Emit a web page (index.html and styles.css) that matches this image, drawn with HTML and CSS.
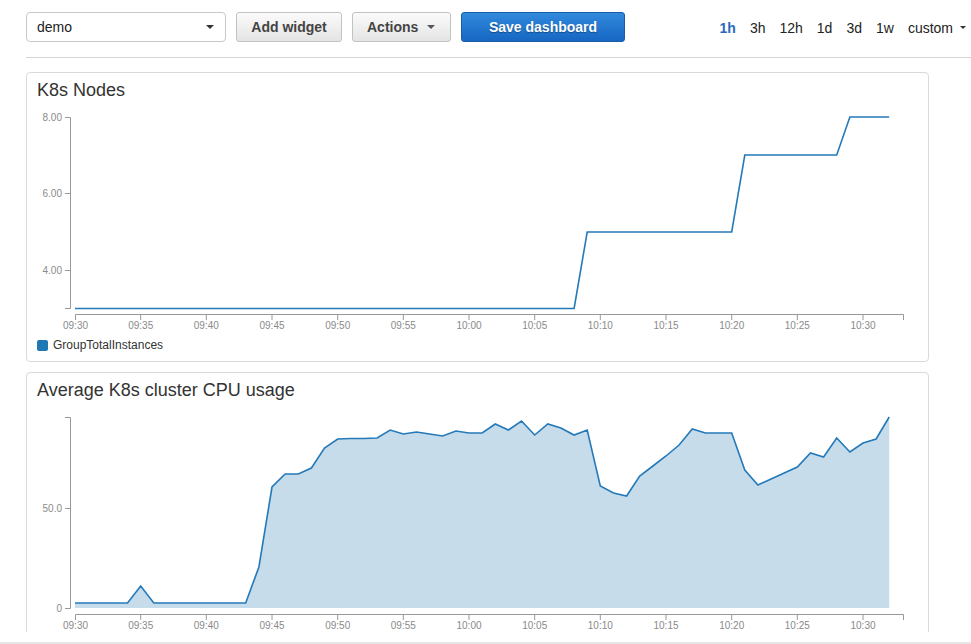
FILE: index.html
```html
<!DOCTYPE html>
<html>
<head>
<meta charset="utf-8">
<title>Dashboard</title>
<link rel="stylesheet" href="styles.css">
</head>
<body>
<div class="toolbar">
  <div class="toolbar-left">
    <div class="select"><span class="select-value">demo</span><span class="caret"></span></div>
    <button class="btn btn-add">Add widget</button>
    <button class="btn btn-actions">Actions<span class="caret caret-btn"></span></button>
    <button class="btn btn-primary">Save dashboard</button>
  </div>
  <div class="ranges">
    <span class="range active">1h</span>
    <span class="range">3h</span>
    <span class="range">12h</span>
    <span class="range">1d</span>
    <span class="range">3d</span>
    <span class="range">1w</span>
    <span class="range range-custom">custom<span class="caret caret-small"></span></span>
  </div>
</div>

<div class="dashboard">
  <div class="panel panel-nodes">
    <div class="panel-title">K8s Nodes</div>
    <svg class="chart" width="901" height="230" viewBox="27 105 901 230">
      <g class="axis">
        <path d="M65,117.5H70.5V308.5H65"/>
        <line x1="65" y1="193.5" x2="70.5" y2="193.5"/>
        <line x1="65" y1="270.5" x2="70.5" y2="270.5"/>
        <text x="62" y="120.5" text-anchor="end">8.00</text>
        <text x="62" y="196.5" text-anchor="end">6.00</text>
        <text x="62" y="273.5" text-anchor="end">4.00</text>
      </g>
      <g class="axis">
        <path d="M75.5,320V314.5H903.5V320"/>
        <line x1="140.7" y1="314.5" x2="140.7" y2="320"/>
        <line x1="206.3" y1="314.5" x2="206.3" y2="320"/>
        <line x1="272" y1="314.5" x2="272" y2="320"/>
        <line x1="337.7" y1="314.5" x2="337.7" y2="320"/>
        <line x1="403.3" y1="314.5" x2="403.3" y2="320"/>
        <line x1="469" y1="314.5" x2="469" y2="320"/>
        <line x1="534.7" y1="314.5" x2="534.7" y2="320"/>
        <line x1="600.3" y1="314.5" x2="600.3" y2="320"/>
        <line x1="666" y1="314.5" x2="666" y2="320"/>
        <line x1="731.7" y1="314.5" x2="731.7" y2="320"/>
        <line x1="797.3" y1="314.5" x2="797.3" y2="320"/>
        <line x1="863" y1="314.5" x2="863" y2="320"/>
        <text x="75.5" y="329" text-anchor="middle">09:30</text>
        <text x="140.7" y="329" text-anchor="middle">09:35</text>
        <text x="206.3" y="329" text-anchor="middle">09:40</text>
        <text x="272" y="329" text-anchor="middle">09:45</text>
        <text x="337.7" y="329" text-anchor="middle">09:50</text>
        <text x="403.3" y="329" text-anchor="middle">09:55</text>
        <text x="469" y="329" text-anchor="middle">10:00</text>
        <text x="534.7" y="329" text-anchor="middle">10:05</text>
        <text x="600.3" y="329" text-anchor="middle">10:10</text>
        <text x="666" y="329" text-anchor="middle">10:15</text>
        <text x="731.7" y="329" text-anchor="middle">10:20</text>
        <text x="797.3" y="329" text-anchor="middle">10:25</text>
        <text x="863" y="329" text-anchor="middle">10:30</text>
      </g>
      <path class="series-line" d="M75,308.5H574.1L587.2,232H731.7L744.8,155H836.7L849.9,117H889.2"/>
    </svg>
    <div class="legend">
      <span class="legend-swatch"></span><span class="legend-label">GroupTotalInstances</span>
    </div>
  </div>

  <div class="panel panel-cpu">
    <div class="panel-title">Average K8s cluster CPU usage</div>
    <svg class="chart" width="901" height="240" viewBox="27 405 901 240">
      <path class="series-area" d="M75,608L75,603L88.1,603L101.3,603L114.4,603L127.5,603L140.7,586L153.8,603L166.9,603L180.1,603L193.2,603L206.3,603L219.5,603L232.6,603L245.7,603L258.9,567L272,487L285.1,474L298.3,474L311.4,468L324.5,448L337.7,439L350.8,438.5L363.9,438.5L377.1,438L390.2,430L403.3,434L416.5,432L429.6,434L442.7,436L455.9,431L469,433L482.1,433L495.3,424L508.4,430L521.5,421L534.7,435L547.8,424L560.9,428L574.1,435L587.2,430L600.3,486L613.5,493L626.6,496L639.7,476L652.9,466L666,456L679.1,445L692.3,429L705.4,433L718.5,433L731.7,433L744.8,470L757.9,485L771.1,479L784.2,473L797.3,467L810.5,453L823.6,457L836.7,438L849.9,452L863,443L876.1,439L889.2,417L889.2,608Z"/>
      <path class="series-line" d="M75,603L88.1,603L101.3,603L114.4,603L127.5,603L140.7,586L153.8,603L166.9,603L180.1,603L193.2,603L206.3,603L219.5,603L232.6,603L245.7,603L258.9,567L272,487L285.1,474L298.3,474L311.4,468L324.5,448L337.7,439L350.8,438.5L363.9,438.5L377.1,438L390.2,430L403.3,434L416.5,432L429.6,434L442.7,436L455.9,431L469,433L482.1,433L495.3,424L508.4,430L521.5,421L534.7,435L547.8,424L560.9,428L574.1,435L587.2,430L600.3,486L613.5,493L626.6,496L639.7,476L652.9,466L666,456L679.1,445L692.3,429L705.4,433L718.5,433L731.7,433L744.8,470L757.9,485L771.1,479L784.2,473L797.3,467L810.5,453L823.6,457L836.7,438L849.9,452L863,443L876.1,439L889.2,417"/>
      <g class="axis">
        <path d="M65,417.5H70.5V608.5H65"/>
        <line x1="65" y1="508.5" x2="70.5" y2="508.5"/>
        <text x="62" y="511.5" text-anchor="end">50.0</text>
        <text x="62" y="611.5" text-anchor="end">0</text>
      </g>
      <g class="axis">
        <path d="M75.5,620V614.5H903.5V620"/>
        <line x1="140.7" y1="614.5" x2="140.7" y2="620"/>
        <line x1="206.3" y1="614.5" x2="206.3" y2="620"/>
        <line x1="272" y1="614.5" x2="272" y2="620"/>
        <line x1="337.7" y1="614.5" x2="337.7" y2="620"/>
        <line x1="403.3" y1="614.5" x2="403.3" y2="620"/>
        <line x1="469" y1="614.5" x2="469" y2="620"/>
        <line x1="534.7" y1="614.5" x2="534.7" y2="620"/>
        <line x1="600.3" y1="614.5" x2="600.3" y2="620"/>
        <line x1="666" y1="614.5" x2="666" y2="620"/>
        <line x1="731.7" y1="614.5" x2="731.7" y2="620"/>
        <line x1="797.3" y1="614.5" x2="797.3" y2="620"/>
        <line x1="863" y1="614.5" x2="863" y2="620"/>
        <text x="75.5" y="629" text-anchor="middle">09:30</text>
        <text x="140.7" y="629" text-anchor="middle">09:35</text>
        <text x="206.3" y="629" text-anchor="middle">09:40</text>
        <text x="272" y="629" text-anchor="middle">09:45</text>
        <text x="337.7" y="629" text-anchor="middle">09:50</text>
        <text x="403.3" y="629" text-anchor="middle">09:55</text>
        <text x="469" y="629" text-anchor="middle">10:00</text>
        <text x="534.7" y="629" text-anchor="middle">10:05</text>
        <text x="600.3" y="629" text-anchor="middle">10:10</text>
        <text x="666" y="629" text-anchor="middle">10:15</text>
        <text x="731.7" y="629" text-anchor="middle">10:20</text>
        <text x="797.3" y="629" text-anchor="middle">10:25</text>
        <text x="863" y="629" text-anchor="middle">10:30</text>
      </g>
    </svg>
  </div>
</div>
<div class="spacer"></div>
<div class="bottom-strip"></div>
</body>
</html>
```

FILE: styles.css
```css
* { box-sizing: border-box; }

html, body {
  margin: 0;
  padding: 0;
  background: #ffffff;
}

body {
  font-family: "Liberation Sans", Arial, Helvetica, sans-serif;
  color: #333;
  width: 971px;
  height: 644px;
  overflow: hidden;
}

.toolbar {
  margin-left: 26px;
  height: 58px;
  padding: 12px 5px 0 0;
  border-bottom: 1px solid #d4d4d4;
  display: flex;
  justify-content: space-between;
  align-items: flex-start;
}

.toolbar-left {
  display: flex;
  gap: 10px;
}

.select {
  width: 200px;
  height: 30px;
  border: 1px solid #c9c9c9;
  border-radius: 4px;
  background: #fff;
  display: flex;
  align-items: center;
  justify-content: space-between;
  padding: 0 11px 0 10px;
  font-size: 14px;
  color: #222;
}

.caret {
  display: inline-block;
  width: 0;
  height: 0;
  border-left: 4px solid transparent;
  border-right: 4px solid transparent;
  border-top: 4px solid #333;
}

.btn {
  height: 30px;
  border: 1px solid #c2c2c2;
  border-radius: 3px;
  background: linear-gradient(#fbfbfb, #e4e4e4);
  font-family: "Liberation Sans", Arial, Helvetica, sans-serif;
  font-weight: bold;
  font-size: 14px;
  color: #444;
  padding: 0;
  display: flex;
  align-items: center;
  justify-content: center;
}

.btn-add { width: 106px; }

.btn-actions {
  width: 99px;
  justify-content: flex-start;
  padding-left: 14px;
}

.caret-btn {
  margin-left: 9px;
  border-top-color: #555;
}

.btn-primary {
  width: 164px;
  background: linear-gradient(#3189dc, #1667c3);
  border-color: #1a5ca6;
  color: #fff;
  text-shadow: 0 1px 1px rgba(0, 0, 0, 0.35);
}

.ranges {
  display: flex;
  align-items: center;
  height: 31px;
  gap: 14px;
  font-size: 14px;
  color: #222;
}

.range.active {
  color: #2a68bd;
  font-weight: bold;
}

.range-custom {
  display: flex;
  align-items: center;
}

.caret-small {
  margin-left: 7px;
  border-left-width: 3px;
  border-right-width: 3px;
  border-top-width: 3px;
}

.dashboard {
  height: 574px;
  overflow: hidden;
  padding: 14px 0 0 26px;
}

.panel {
  width: 903px;
  border: 1px solid #dadada;
  border-radius: 4px;
  background: #fff;
}

.panel-nodes {
  height: 290px;
  margin-bottom: 10px;
}

.panel-cpu {
  height: 300px;
}

.panel-title {
  height: 32px;
  padding: 2px 10px 0;
  line-height: 30px;
  font-size: 18px;
  color: #333;
}

.chart {
  display: block;
}

.axis path,
.axis line {
  fill: none;
  stroke: #999;
  stroke-width: 1;
}

.axis text {
  font-family: "Liberation Sans", Arial, Helvetica, sans-serif;
  font-size: 10px;
  fill: #8a8a8a;
}

.series-line {
  fill: none;
  stroke: #2479b9;
  stroke-width: 1.6;
  stroke-linejoin: miter;
}

.series-area {
  fill: #c6dcea;
  stroke: none;
}

.legend {
  height: 20px;
  padding-left: 10px;
  display: flex;
  align-items: center;
  font-size: 12px;
  color: #333;
}

.legend-swatch {
  width: 11px;
  height: 11px;
  border-radius: 2px;
  background: #1f77b4;
  margin-right: 5px;
}

.spacer {
  height: 10px;
}

.bottom-strip {
  height: 2px;
  background: #e6e6e6;
}
```
